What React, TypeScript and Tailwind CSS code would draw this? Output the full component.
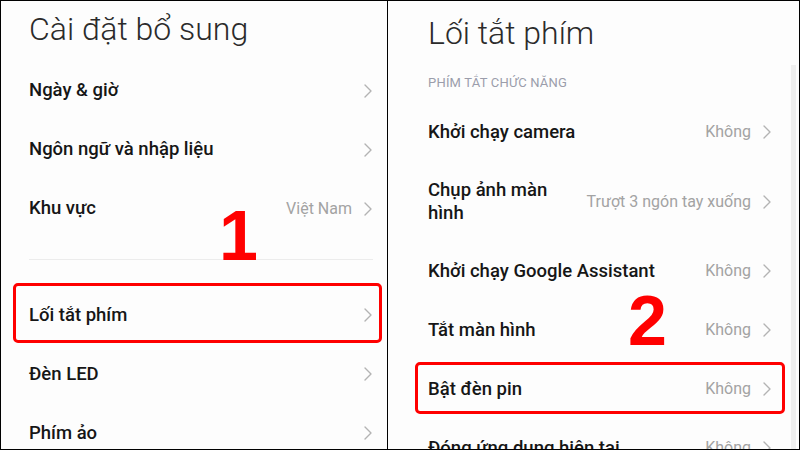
import React from "react";

const Chevron = () => (
  <svg width="10" height="16" viewBox="0 0 10 16" className="shrink-0">
    <path d="M2 2 L8 8 L2 14" fill="none" stroke="#b3b3b3" strokeWidth="1.4" strokeLinecap="round" strokeLinejoin="round" />
  </svg>
);

const Row = ({ title, value, h = "h-[59px]" }: { title: React.ReactNode; value?: string; h?: string }) => (
  <div className={`${h} shrink-0 flex items-center`}>
    <div className="flex-1 text-[18.5px] font-medium text-[#161616] leading-[23px]">{title}</div>
    {value && <div className="text-[16px] text-[#a3a3a3] mr-[11px]">{value}</div>}
    <Chevron />
  </div>
);

export default function App() {
  return (
    <div
      className="relative w-[800px] h-[450px] overflow-hidden bg-white border border-black flex"
      style={{ fontFamily: "Roboto, 'Noto Sans', sans-serif" }}
    >
      {/* Left panel */}
      <div className="w-[386px] h-full overflow-hidden bg-[#fdfdfd] pl-[28px] pr-[14px] flex flex-col">
        <div className="h-[60px] shrink-0 flex items-start pt-[8px]">
          <div className="text-[32px] font-light text-[#2b2b2b] leading-[40px]">Cài đặt bổ sung</div>
        </div>
        <Row title="Ngày & giờ" />
        <Row title="Ngôn ngữ và nhập liệu" />
        <Row title="Khu vực" value="Việt Nam" />
        <div className="h-[47.5px] shrink-0 pt-[21px]">
          <div className="border-t border-[#ececec]" />
        </div>
        <Row title="Lối tắt phím" />
        <Row title="Đèn LED" />
        <Row title="Phím ảo" />
      </div>

      <div className="w-px h-full bg-black" />

      {/* Right panel */}
      <div className="relative flex-1 h-full overflow-hidden bg-[#fdfdfd] pl-[40px] pr-[27px] flex flex-col">
        <div className="h-[62px] shrink-0 flex items-start pt-[12px]">
          <div className="text-[32px] font-light text-[#2b2b2b] leading-[40px]">Lối tắt phím</div>
        </div>
        <div className="h-[39.5px] shrink-0 flex items-center pb-[1px]">
          <div className="text-[13px] text-[#9b9dab] tracking-[0.2px]">PHÍM TẮT CHỨC NĂNG</div>
        </div>
        <Row title="Khởi chạy camera" value="Không" />
        <Row
          h="h-[80px]"
          title={
            <>
              Chụp ảnh màn
              <br />
              hình
            </>
          }
          value="Trượt 3 ngón tay xuống"
        />
        <Row title="Khởi chạy Google Assistant" value="Không" />
        <Row title="Tắt màn hình" value="Không" />
        <Row title="Bật đèn pin" value="Không" />
        <Row title="Đóng ứng dụng hiện tại" value="Không" />
        <div className="absolute right-[3px] top-[64px] bottom-0 w-[5px] bg-[#efefef]" />
      </div>

      {/* Annotations */}
      <div className="absolute left-[12px] top-[282px] w-[369px] h-[60px] border-[3px] border-[#ff0000] rounded-[5px]" />
      <div
        className="absolute left-[218px] top-[200px] text-[70px] font-bold text-[#ff0000] leading-none"
        style={{ fontFamily: "'Liberation Sans', Arial, sans-serif" }}
      >
        1
      </div>
      <div className="absolute left-[414px] top-[361px] w-[370px] h-[52px] border-[3px] border-[#ff0000] rounded-[5px]" />
      <div
        className="absolute left-[627px] top-[285px] text-[70px] font-bold text-[#ff0000] leading-none"
        style={{ fontFamily: "'Liberation Sans', Arial, sans-serif" }}
      >
        2
      </div>
    </div>
  );
}
